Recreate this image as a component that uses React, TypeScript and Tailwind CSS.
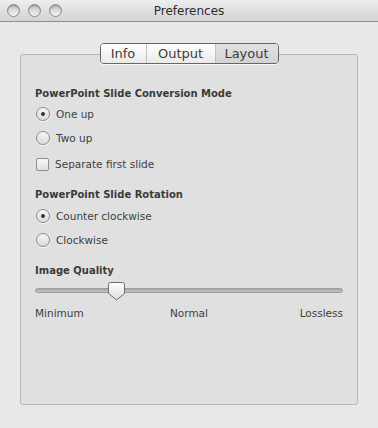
import React from 'react'

const FONT = { fontFamily: '"DejaVu Sans", "Lucida Grande", sans-serif' }

function TrafficLight() {
  return (
    <span className="block h-[13px] w-[13px] rounded-full border border-[#8c8c8c] bg-gradient-to-b from-[#bdbdbd] via-[#dcdcdc] to-[#f4f4f4] shadow-[inset_0_1px_1px_rgba(0,0,0,0.25)]" />
  )
}

function Radio({ label, checked, className = '' }: { label: string; checked?: boolean; className?: string }) {
  return (
    <div className={`flex h-4 items-center gap-[6px] pl-px ${className}`}>
      <span className="flex h-[14px] w-[14px] items-center justify-center rounded-full border border-[#8a8a8a] bg-gradient-to-b from-[#f6f6f6] to-[#dadada] shadow-[0_1px_0_rgba(255,255,255,0.7)]">
        {checked && <span className="block h-[4px] w-[4px] rounded-full bg-[#333]" />}
      </span>
      <span className="text-[10.5px] leading-none text-[#404040]">{label}</span>
    </div>
  )
}

function Heading({ children, className = '' }: { children: React.ReactNode; className?: string }) {
  return <div className={`flex h-4 items-center text-[10px] font-bold leading-none text-[#3a3a3a] ${className}`}>{children}</div>
}

export default function App() {
  return (
    <div className="flex h-[428px] w-[378px] flex-col bg-[#e8e8e8]" style={FONT}>
      {/* title bar */}
      <div className="relative flex h-[22px] shrink-0 items-center border-b border-[#8e8e8e] bg-gradient-to-b from-[#eeeeee] to-[#d3d3d3] pl-[7px]">
        <div className="flex gap-[8px]">
          <TrafficLight />
          <TrafficLight />
          <TrafficLight />
        </div>
        <div className="absolute inset-0 flex items-center justify-center text-[12px] text-[#2c2c2c]">Preferences</div>
      </div>

      <div className="px-[20px] pt-[32px]">
        <div className="flex h-[351px] flex-col rounded-[3px] border border-[#b6b6b6] bg-[#e0e0e0] px-[14px]">
          {/* tabs */}
          <div className="-mt-[12px] flex h-[21px] self-center overflow-hidden rounded-[4px] border border-[#666] text-[13px] leading-none text-[#3c3c3c] shadow-[0_1px_0_rgba(255,255,255,0.8)]">
            <div className="flex w-[46px] items-center justify-center border-r border-[#c4c4c4] bg-gradient-to-b from-white to-[#eaeaea]">Info</div>
            <div className="flex w-[69px] items-center justify-center border-r border-[#c4c4c4] bg-gradient-to-b from-white to-[#eaeaea]">Output</div>
            <div className="flex w-[62px] items-center justify-center bg-gradient-to-b from-[#e2e2e2] to-[#d2d2d2]">Layout</div>
          </div>

          <Heading className="mt-[22px]">PowerPoint Slide Conversion Mode</Heading>
          <Radio className="mt-[4px]" label="One up" checked />
          <Radio className="mt-[8px]" label="Two up" />
          <div className="mt-[10px] flex h-4 items-center gap-[6px] pl-px">
            <span className="block h-[13px] w-[13px] rounded-[2px] border border-[#8f8f8f] bg-gradient-to-b from-[#f8f8f8] to-[#dedede]" />
            <span className="text-[10.5px] leading-none text-[#404040]">Separate first slide</span>
          </div>

          <Heading className="mt-[15px]">PowerPoint Slide Rotation</Heading>
          <Radio className="mt-[5px]" label="Counter clockwise" checked />
          <Radio className="mt-[8px]" label="Clockwise" />

          <Heading className="mt-[15px]">Image Quality</Heading>
          <div className="relative mt-px flex h-[20px] items-center">
            <div className="h-[5px] w-full rounded-full border border-[#9c9c9c] bg-gradient-to-b from-[#a6a6a6] to-[#c4c4c4]" />
            <svg className="absolute left-[73px] top-[2px]" width="17" height="19" viewBox="0 0 17 19">
              <defs>
                <linearGradient id="thumb" x1="0" y1="0" x2="0" y2="1">
                  <stop offset="0" stopColor="#ffffff" />
                  <stop offset="1" stopColor="#dcdcdc" />
                </linearGradient>
              </defs>
              <path d="M2.5 0.5 H14.5 Q16.5 0.5 16.5 2.5 V11.5 L8.5 18 L0.5 11.5 V2.5 Q0.5 0.5 2.5 0.5 Z" fill="url(#thumb)" stroke="#6e6e6e" />
            </svg>
          </div>
          <div className="mt-[5px] grid h-4 grid-cols-3 items-center text-[10.5px] leading-none text-[#404040]">
            <span className="text-left">Minimum</span>
            <span className="text-center">Normal</span>
            <span className="text-right">Lossless</span>
          </div>
        </div>
      </div>
    </div>
  )
}
